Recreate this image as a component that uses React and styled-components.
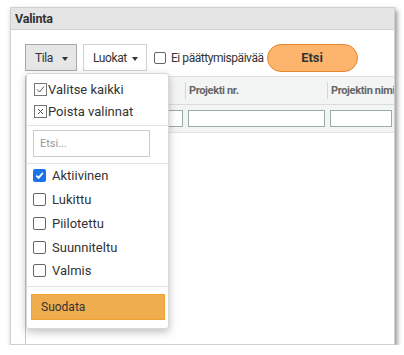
import React from "react";
import styled, { createGlobalStyle } from "styled-components";

const Global = createGlobalStyle`
  body {
    margin: 0;
    background: #fff;
    font-family: "Roboto", "Liberation Sans", sans-serif;
  }
`;

const Panel = styled.div`
  margin: 7px 0 0 10px;
  width: 385px;
  height: 338px;
  box-sizing: border-box;
  border: 1px solid #d0d0d0;
  box-shadow: 2px 3px 5px rgba(0, 0, 0, 0.45);
  display: flex;
  flex-direction: column;
  overflow: hidden;
`;

const Header = styled.div`
  height: 21px;
  line-height: 21px;
  background: #e5e5e5;
  border-bottom: 1px solid #d0d0d0;
  padding-left: 4px;
  font-size: 12.5px;
  font-weight: bold;
  letter-spacing: -0.2px;
  color: #333;
`;

const Body = styled.div`
  flex: 1;
  padding: 14px 0 0 14px;
  display: flex;
  flex-direction: column;
  position: relative;
`;

const Toolbar = styled.div`
  display: flex;
  align-items: center;
  height: 27px;
`;

const DropButton = styled.div`
  box-sizing: border-box;
  width: ${(p) => p.w}px;
  height: 27px;
  margin-right: 6px;
  border: 1px solid ${(p) => (p.active ? "#a8a8a8" : "#d0d0d0")};
  background: ${(p) => (p.active ? "#e6e6e6" : "#fff")};
  display: flex;
  align-items: center;
  justify-content: space-between;
  padding: 0 8px 0 9px;
  font-size: 12px;
  letter-spacing: -0.4px;
  color: #333;
  white-space: nowrap;
`;

const Caret = styled.span`
  flex: none;
  width: 0;
  height: 0;
  margin-top: 3px;
  border-left: 3.5px solid transparent;
  border-right: 3.5px solid transparent;
  border-top: 4px solid #333;
`;

const CheckField = styled.label`
  display: flex;
  align-items: center;
  white-space: nowrap;
  font-size: 12px;
  letter-spacing: -0.45px;
  color: #333;
`;

const Check = styled.span`
  flex: none;
  box-sizing: border-box;
  width: 12px;
  height: 12px;
  border: 1px solid #666;
  border-radius: 2px;
  margin: 1px 5px 0 1px;
`;

const SearchButton = styled.div`
  box-sizing: border-box;
  margin-left: 3px;
  width: 91px;
  height: 28px;
  border-radius: 14px;
  border: 1px solid #e5852d;
  background: #fdb46c;
  display: flex;
  align-items: center;
  justify-content: center;
  font-size: 13px;
  font-weight: bold;
  color: #333;
`;

const Table = styled.div`
  margin-top: 5px;
  flex: 1;
  border-left: 1px solid #c8c8c8;
  display: flex;
  flex-direction: column;
`;

const HeadRow = styled.div`
  height: 27px;
  background: #f3f4f4;
  border-top: 1px solid #e0e0e0;
  display: grid;
  grid-template-columns: 159px 142px 1fr;
  align-items: center;
`;

const HeadCell = styled.div`
  height: 17px;
  line-height: 17px;
  border-left: ${(p) => (p.first ? "none" : "1px solid #d6d6d6")};
  padding-left: 3px;
  font-size: 11px;
  font-weight: bold;
  letter-spacing: -0.35px;
  color: #666;
  white-space: nowrap;
`;

const FilterRow = styled.div`
  height: 27px;
  background: #f3f4f4;
  border-top: 1px solid #d8dcdc;
  border-bottom: 1px solid #e4e4e4;
  display: grid;
  grid-template-columns: 159px 142px 1fr;
  align-items: center;
`;

const FilterInput = styled.div`
  box-sizing: border-box;
  height: 17px;
  margin-left: 3px;
  margin-right: 2px;
  border: 1px solid #9aaca8;
  background: #fff;
`;

const Menu = styled.div`
  position: absolute;
  left: 15px;
  top: 43px;
  box-sizing: border-box;
  width: 143px;
  height: 256px;
  background: #fff;
  border: 1px solid #d8d8d8;
  border-radius: 3px;
  box-shadow: 0 3px 8px rgba(0, 0, 0, 0.25);
  display: flex;
  flex-direction: column;
  z-index: 2;
`;

const MenuSection = styled.div`
  padding: ${(p) => p.pad};
  border-bottom: ${(p) => (p.last ? "none" : "1px solid #e3e3e3")};
  display: flex;
  flex-direction: column;
`;

const Action = styled.div`
  display: flex;
  align-items: center;
  height: 22px;
  font-size: 13px;
  color: #333;
`;

const ActionBox = styled.span`
  box-sizing: border-box;
  width: 13px;
  height: 13px;
  border: 1px solid #777;
  display: flex;
  align-items: center;
  justify-content: center;
  margin-right: 1px;
`;

const SearchInput = styled.div`
  box-sizing: border-box;
  width: 117px;
  height: 27px;
  border: 1px solid #ccc;
  padding-left: 6px;
  display: flex;
  align-items: center;
  font-size: 11px;
  color: #999;
`;

const Option = styled.div`
  display: flex;
  align-items: center;
  height: 23.75px;
  font-size: 13px;
  color: #333;
`;

const OptionBox = styled.span`
  box-sizing: border-box;
  width: 13px;
  height: 13px;
  border-radius: 2px;
  border: ${(p) => (p.on ? "none" : "1.5px solid #666")};
  background: ${(p) => (p.on ? "#1a73e8" : "#fff")};
  margin-right: 6px;
  display: flex;
  align-items: center;
  justify-content: center;
`;

const FilterButton = styled.div`
  box-sizing: border-box;
  height: 26px;
  background: #f0ad4e;
  border: 1px solid #eea236;
  display: flex;
  align-items: center;
  padding-left: 9px;
  font-size: 12px;
  color: #333;
`;

const statuses = [
  { label: "Aktiivinen", on: true },
  { label: "Lukittu" },
  { label: "Piilotettu" },
  { label: "Suunniteltu" },
  { label: "Valmis" },
];

export default () => {
  return (
    <>
      <Global />
      <Panel>
        <Header>Valinta</Header>
        <Body>
          <Toolbar>
            <DropButton active w={52}>
              <span>Tila</span>
              <Caret />
            </DropButton>
            <DropButton w={64}>
              <span>Luokat</span>
              <Caret />
            </DropButton>
            <CheckField>
              <Check />
              Ei päättymispäivää
            </CheckField>
            <SearchButton>Etsi</SearchButton>
          </Toolbar>
          <Table>
            <HeadRow>
              <HeadCell first />
              <HeadCell>Projekti nr.</HeadCell>
              <HeadCell>Projektin nimi</HeadCell>
            </HeadRow>
            <FilterRow>
              <FilterInput />
              <FilterInput />
              <FilterInput />
            </FilterRow>
          </Table>
          <Menu>
            <MenuSection pad="4px 0 3px 7px">
              <Action>
                <ActionBox>
                  <svg width="9" height="9" viewBox="0 0 9 9">
                    <path d="M1 4.5 L3.5 7 L8 1.5" fill="none" stroke="#555" strokeWidth="1" />
                  </svg>
                </ActionBox>
                Valitse kaikki
              </Action>
              <Action>
                <ActionBox>
                  <svg width="7" height="7" viewBox="0 0 7 7">
                    <path d="M1 1 L6 6 M6 1 L1 6" stroke="#555" strokeWidth="1" />
                  </svg>
                </ActionBox>
                Poista valinnat
              </Action>
            </MenuSection>
            <MenuSection pad="4px 0 6px 6px">
              <SearchInput>Etsi...</SearchInput>
            </MenuSection>
            <MenuSection pad="0 0 3px 6px">
              {statuses.map((s) => (
                <Option key={s.label}>
                  <OptionBox on={s.on}>
                    {s.on && (
                      <svg width="9" height="9" viewBox="0 0 9 9">
                        <path d="M1.3 4.6 L3.6 6.9 L7.8 1.9" fill="none" stroke="#fff" strokeWidth="1.8" />
                      </svg>
                    )}
                  </OptionBox>
                  {s.label}
                </Option>
              ))}
            </MenuSection>
            <MenuSection last pad="7px 3px 0 4px">
              <FilterButton>Suodata</FilterButton>
            </MenuSection>
          </Menu>
        </Body>
      </Panel>
    </>
  );
};
